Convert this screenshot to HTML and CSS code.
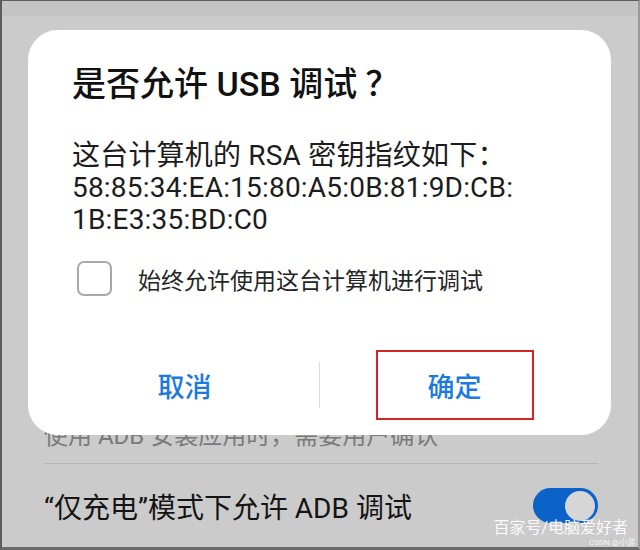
FILE: index.html
```html
<!DOCTYPE html>
<html lang="zh-CN">
<head>
<meta charset="utf-8">
<title>是否允许 USB 调试？</title>
<link rel="stylesheet" href="styles.css">
</head>
<body>
<div class="screen">
  <div class="statusband"></div>
  <div class="settings">
    <div class="hidden-row">使用 ADB 安装应用时，需要用户确认</div>
    <div class="divider"></div>
    <div class="toggle-row">
      <span class="toggle-label">“仅充电”模式下允许 ADB 调试</span>
      <span class="switch"><span class="thumb"></span></span>
    </div>
  </div>

  <div class="dialog">
    <h1 class="title">是否允许 USB 调试<span class="qmark">？</span></h1>
    <p class="body">这台计算机的 RSA 密钥指纹如下：<br>58:85:34:EA:15:80:A5:0B:81:9D:CB:<br>1B:E3:35:BD:C0</p>
    <div class="check-row">
      <span class="checkbox"></span>
      <span class="check-label">始终允许使用这台计算机进行调试</span>
    </div>
    <div class="buttons">
      <div class="btn"><span>取消</span></div>
      <div class="sep"></div>
      <div class="btn"><span class="highlight">确定</span></div>
    </div>
  </div>

  <div class="watermark">百家号/电脑爱好者</div>
  <div class="csdn">CSDN @小游</div>
</div>
</body>
</html>
```

FILE: styles.css
```css
* { box-sizing: border-box; }
html, body { margin: 0; padding: 0; }
body {
  font-family: "Roboto", "Noto Sans CJK SC", sans-serif;
  background: #cbcbcb;
}
.screen {
  position: relative;
  width: 640px;
  height: 550px;
  overflow: hidden;
  background: #cbcbcb;
  border-top: 1px solid #5c5c5c;
  border-left: 2px solid #5c5c5c;
  border-right: 2px solid #9a9a9a;
  border-bottom: 3px solid #6a6a6a;
}
.statusband {
  height: 15px;
  background: #c4c4c4;
}
.settings {
  padding: 405px 40px 0 42px;
}
.hidden-row {
  font-size: 24px;
  line-height: 30px;
  color: #7a7a7a;
  white-space: nowrap;
}
.divider {
  margin-top: 12px;
  height: 1px;
  background: #b6b6b6;
}
.toggle-row {
  margin-top: 24px;
  height: 35px;
  display: flex;
  align-items: center;
  justify-content: space-between;
}
.toggle-label {
  font-size: 28px;
  color: #141414;
  white-space: nowrap;
}
.switch {
  width: 65px;
  height: 35px;
  border-radius: 18px;
  background: #0b62c9;
  display: flex;
  align-items: center;
  justify-content: flex-end;
  padding-right: 3px;
}
.thumb {
  width: 30px;
  height: 30px;
  border-radius: 50%;
  background: #d6d6d6;
}

.dialog {
  position: absolute;
  left: 26px;
  top: 29px;
  width: 583px;
  height: 405px;
  background: #fff;
  border-radius: 30px;
  padding: 34px 22px 0 44px;
}
.title {
  margin: 0;
  height: 40px;
  font-size: 34px;
  line-height: 40px;
  font-weight: 500;
  color: #111;
  white-space: nowrap;
}
.qmark {
  margin-left: 8px;
}
.body {
  margin: 36px 0 0;
  font-size: 28px;
  line-height: 32px;
  color: #1c1c1c;
  letter-spacing: 0.2px;
  white-space: nowrap;
}
.check-row {
  margin-top: 25px;
  display: flex;
  align-items: center;
  gap: 26px;
  padding-left: 5px;
}
.checkbox {
  width: 35px;
  height: 35px;
  border: 2px solid #a8a8a8;
  border-radius: 7px;
  flex: none;
}
.check-label {
  font-size: 23px;
  color: #262626;
  white-space: nowrap;
}
.buttons {
  margin: 54px 0 0 -22px;
  display: flex;
  align-items: center;
  height: 70px;
}
.btn {
  flex: 1;
  display: flex;
  align-items: center;
  justify-content: center;
  height: 70px;
  font-size: 27px;
  font-weight: 500;
  color: #1c7ade;
}
.sep {
  width: 1px;
  height: 46px;
  background: #dcdcdc;
}
.highlight {
  width: 158px;
  height: 70px;
  border: 2px solid #d42424;
  display: flex;
  align-items: center;
  justify-content: center;
}

.watermark {
  position: absolute;
  right: 10px;
  bottom: 9px;
  font-size: 16px;
  line-height: 20px;
  color: rgba(255,255,255,0.92);
  white-space: nowrap;
}
.csdn {
  position: absolute;
  right: 3px;
  bottom: 0;
  font-size: 8px;
  line-height: 9px;
  color: rgba(255,255,255,0.8);
  white-space: nowrap;
}
```
